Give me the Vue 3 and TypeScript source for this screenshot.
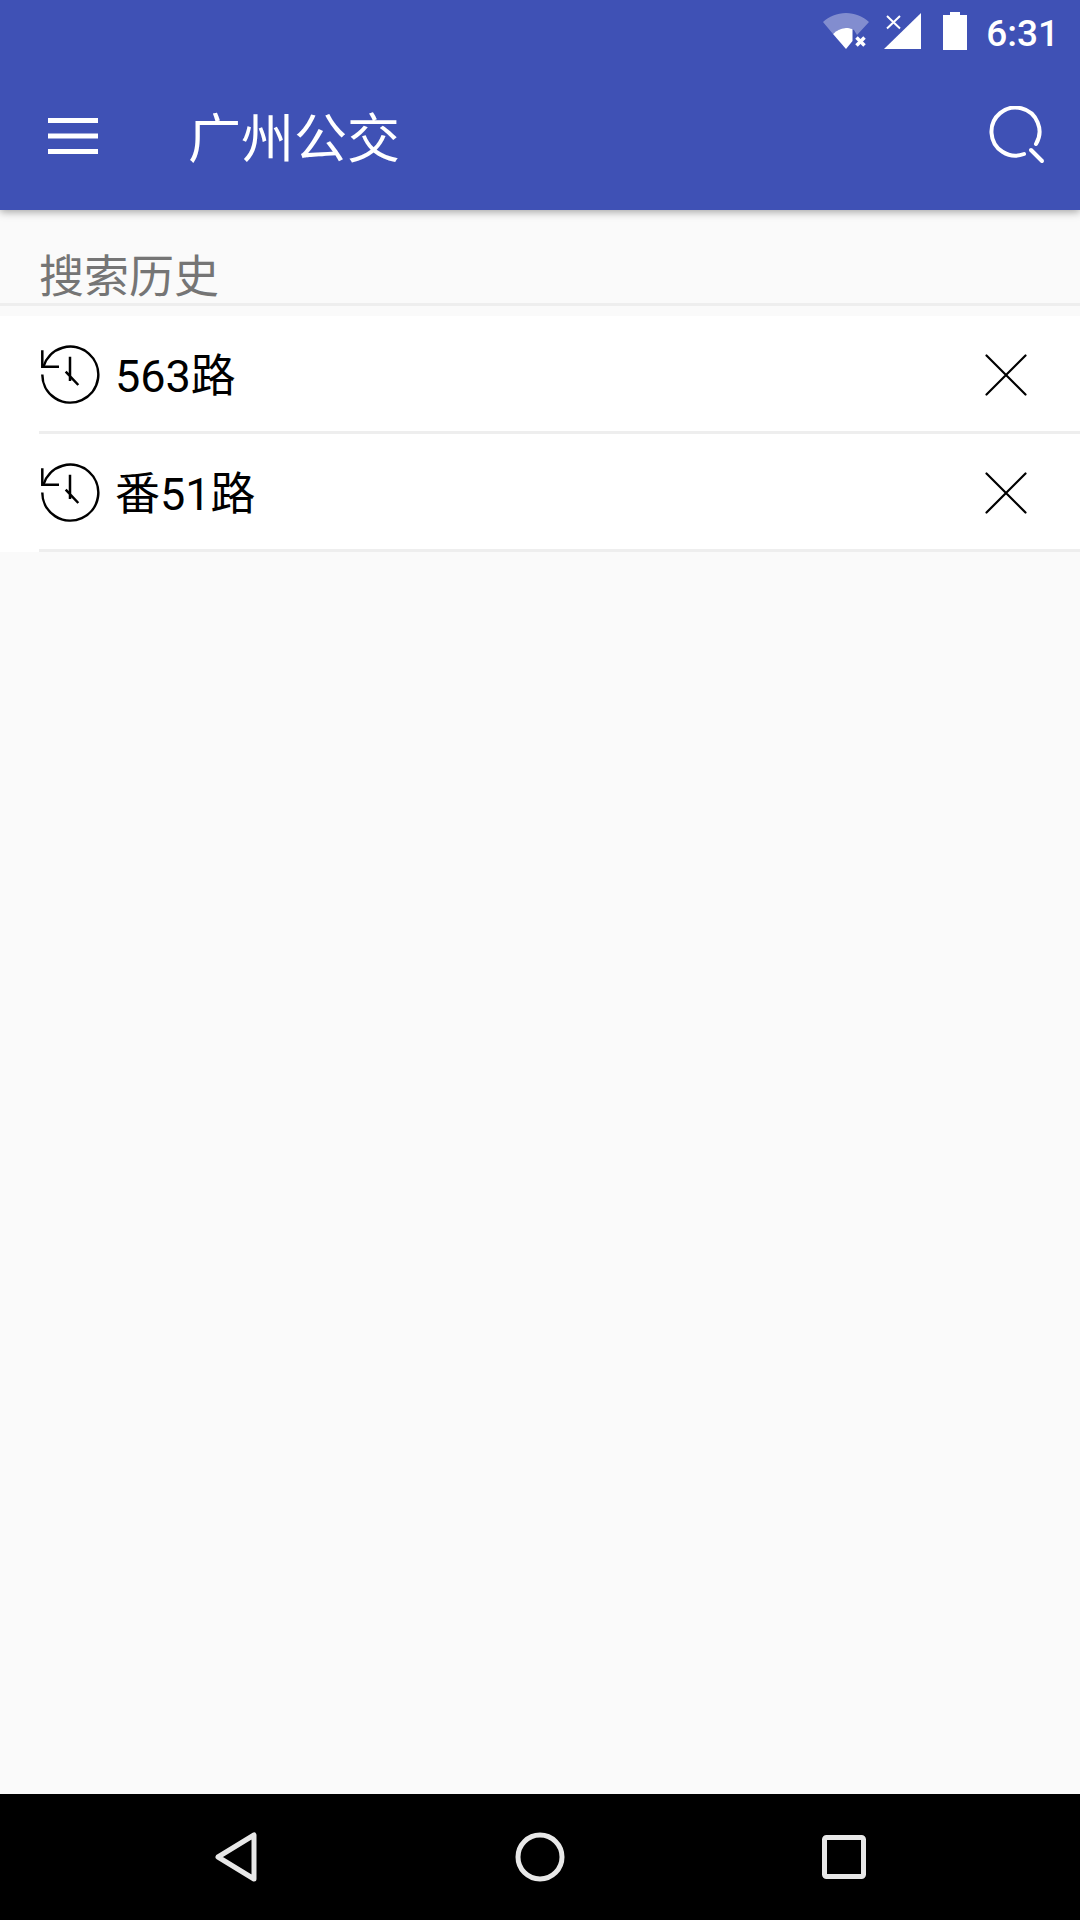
<script setup lang="ts">
const history = ['563路', '番51路']
</script>

<template>
  <div class="page">
    <header class="appbar">
      <div class="status">
        <svg class="wifi" width="46" height="38" viewBox="0 0 46 38">
          <path d="M0 9C6 3.500 14 0 23 0s17 3.500 23 9L34 22l-3-5C28 15.800 26 15 23 15 18 15 13.500 17.500 10 21z" fill="#fff" opacity="0.35" />
          <path d="M10 21C13.500 17.500 18 15 23 15c2.500 0 4.500.5 6.500 1.300V28L23 36z" fill="#fff" />
          <path d="M33.500 24.500l8 8M41.500 24.500l-8 8" stroke="#fff" stroke-width="3.500" fill="none" />
        </svg>
        <svg class="signal" width="37" height="37" viewBox="-1 0 37 37">
          <path d="M36 0v36H-1z" fill="#fff" />
          <path d="M2 3l13 12.500M15 3L2 15.500" stroke="#fff" stroke-width="2" fill="none" />
        </svg>
        <svg class="battery" width="24" height="38" viewBox="0 0 24 38">
          <path d="M7 0h10v3h7v35H0V3h7z" fill="#fff" />
        </svg>
        <span class="time">6:31</span>
      </div>
      <div class="toolbar">
        <svg class="menu" width="50" height="36" viewBox="0 0 50 36">
          <path d="M0 2.500h50M0 18h50M0 33.500h50" stroke="#fff" stroke-width="5" fill="none" />
        </svg>
        <h1 class="title">广州公交</h1>
        <svg class="search" width="60" height="60" viewBox="0 0 60 60">
          <path d="M36 48A24 24 0 1 1 48 38" stroke="#fff" stroke-width="4" stroke-linecap="round" fill="none" />
          <path d="M43 44l11 11" stroke="#fff" stroke-width="4" stroke-linecap="round" fill="none" />
        </svg>
      </div>
    </header>

    <main class="content">
      <div class="section-title">搜索历史</div>
      <ul class="list">
        <li v-for="name in history" :key="name" class="row">
          <svg class="clock" width="60" height="60" viewBox="0 0 60 60">
            <path d="M3.500 21.500A28 28 0 1 1 2.300 29.500" stroke="#000" stroke-width="2.500" fill="none" />
            <path d="M2.300 5.300V21.700H19" stroke="#000" stroke-width="2.500" fill="none" />
            <path d="M30 11.700V36M25.700 26.700L38.300 40" stroke="#000" stroke-width="2.500" fill="none" />
          </svg>
          <span class="name">{{ name }}</span>
          <svg class="close" width="42" height="42" viewBox="0 0 42 42">
            <path d="M1.500 1.500l39 39M40.500 1.500l-39 39" stroke="#000" stroke-width="2.200" stroke-linecap="round" fill="none" />
          </svg>
        </li>
      </ul>
    </main>

    <nav class="navbar">
      <svg width="42" height="50" viewBox="0 0 42 50">
        <path d="M39 3v44L3 25z" stroke="#e8e8e8" stroke-width="5" stroke-linejoin="round" fill="none" />
      </svg>
      <svg width="50" height="50" viewBox="0 0 50 50">
        <circle cx="25" cy="25" r="22" stroke="#e8e8e8" stroke-width="5" fill="none" />
      </svg>
      <svg width="44" height="44" viewBox="0 0 44 44">
        <rect x="2.500" y="2.500" width="39" height="39" rx="2" stroke="#e8e8e8" stroke-width="5" fill="none" />
      </svg>
    </nav>
  </div>
</template>

<style>
html,
body {
  margin: 0;
  background: #fafafa;
}
</style>

<style scoped>
.page {
  display: flex;
  flex-direction: column;
  width: 1080px;
  height: 1920px;
  overflow: hidden;
  background: #fafafa;
  font-family: Roboto, "Noto Sans CJK SC", sans-serif;
}

.appbar {
  position: relative;
  z-index: 1;
  height: 210px;
  flex-shrink: 0;
  background: #3f51b5;
  box-shadow: 0 2px 8px rgba(0, 0, 0, 0.35);
}

.status {
  display: flex;
  align-items: flex-start;
  justify-content: flex-end;
  height: 62px;
  padding: 12px 21px 0 0;
  box-sizing: border-box;
}

.wifi {
  margin-top: 1px;
  margin-right: 15px;
}

.signal {
  margin-top: 1px;
  margin-right: 22px;
}

.battery {
  margin-right: 19px;
}

.time {
  margin-top: 2px;
  color: #fff;
  font-size: 37px;
  font-weight: 500;
  line-height: 40px;
}

.toolbar {
  display: flex;
  align-items: center;
  height: 148px;
  padding: 0 32px 0 48px;
  box-sizing: border-box;
}

.menu {
  flex-shrink: 0;
}

.title {
  flex: 1;
  margin: 8px 0 0 90px;
  color: #fff;
  font-size: 53px;
  font-weight: 400;
  line-height: 60px;
}

.section-title {
  height: 96px;
  padding: 0 0 0 39px;
  box-sizing: border-box;
  border-bottom: 3px solid #eeeeee;
  color: #757575;
  font-size: 45px;
  line-height: 136px;
  overflow: hidden;
}

.list {
  margin: 10px 0 0;
  padding: 0;
  list-style: none;
  background: #fff;
}

.row {
  display: flex;
  align-items: center;
  height: 118px;
  margin-left: 39px;
  box-sizing: border-box;
  border-bottom: 3px solid #eeeeee;
}

.clock {
  flex-shrink: 0;
  margin-left: 1px;
  margin-top: 3px;
}

.name {
  flex: 1;
  margin-left: 15px;
  margin-bottom: 2px;
  color: #000;
  font-size: 45px;
}

.close {
  margin-top: 3px;
  margin-right: 53px;
}

.content {
  flex: 1;
}

.navbar {
  display: flex;
  align-items: center;
  justify-content: space-between;
  height: 126px;
  padding: 0 214px 0 215px;
  box-sizing: border-box;
  background: #000;
}
</style>
